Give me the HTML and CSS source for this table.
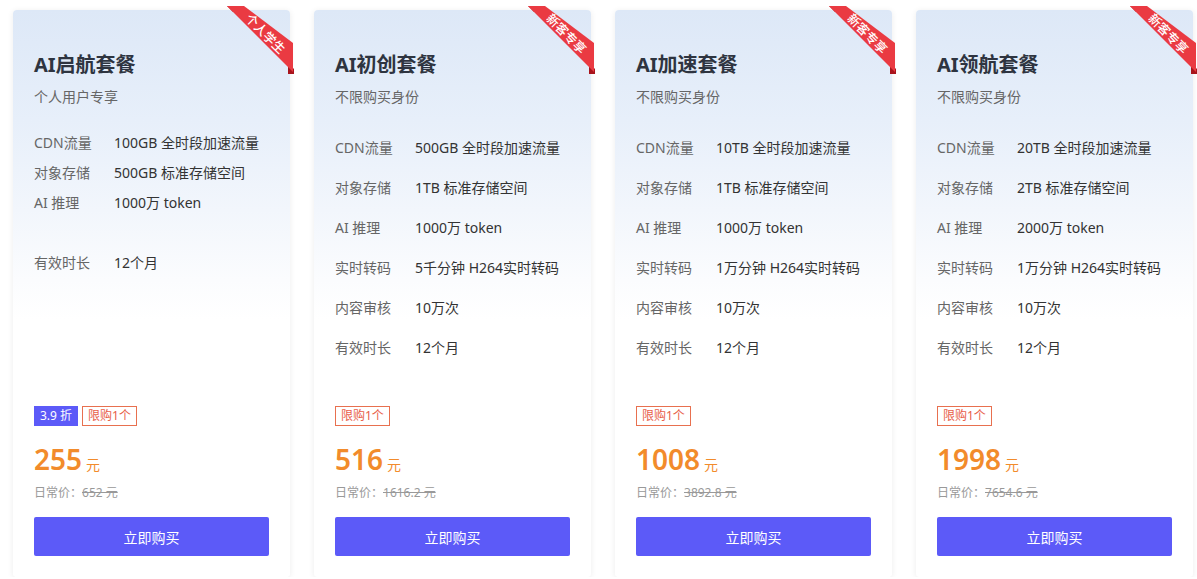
FILE: index.html
```html
<!DOCTYPE html>
<html>
  <head>
    <meta charset="utf-8">
    <title>AI 套餐</title>
    <link rel="stylesheet" href="styles.css">
  </head>
  <body>
    <div class="plans">

      <div class="card">
        <svg class="ribbon" width="70" height="75" viewBox="0 0 70 75">
          <polygon class="fold" points="2,1 8,1 8,7" />
          <polygon class="fold" points="63,58 69,64 69,69 63,69" />
          <polygon class="band" points="2,1 19,1 68,38 68,67" />
          <text x="41" y="28" transform="rotate(45 41 28)">个人学生</text>
        </svg>
        <div class="card-head">
          <h3 class="title">AI启航套餐</h3>
          <p class="sub">个人用户专享</p>
        </div>
        <ul class="specs compact">
          <li><span class="k">CDN流量</span><span class="v">100GB 全时段加速流量</span></li>
          <li><span class="k">对象存储</span><span class="v">500GB 标准存储空间</span></li>
          <li><span class="k">AI 推理</span><span class="v">1000万 token</span></li>
          <li></li>
          <li><span class="k">有效时长</span><span class="v">12个月</span></li>
        </ul>
        <div class="bottom">
          <div class="tags"><span class="tag off">3.9 折</span><span class="tag limit">限购1个</span></div>
          <div class="price">255<small>元</small></div>
          <div class="orig">日常价：<s>652 元</s></div>
          <button class="buy">立即购买</button>
        </div>
      </div>

      <div class="card">
        <svg class="ribbon" width="70" height="75" viewBox="0 0 70 75">
          <polygon class="fold" points="2,1 8,1 8,7" />
          <polygon class="fold" points="63,58 69,64 69,69 63,69" />
          <polygon class="band" points="2,1 19,1 68,38 68,67" />
          <text x="41" y="28" transform="rotate(45 41 28)">新客专享</text>
        </svg>
        <div class="card-head">
          <h3 class="title">AI初创套餐</h3>
          <p class="sub">不限购买身份</p>
        </div>
        <ul class="specs">
          <li><span class="k">CDN流量</span><span class="v">500GB 全时段加速流量</span></li>
          <li><span class="k">对象存储</span><span class="v">1TB 标准存储空间</span></li>
          <li><span class="k">AI 推理</span><span class="v">1000万 token</span></li>
          <li><span class="k">实时转码</span><span class="v">5千分钟 H264实时转码</span></li>
          <li><span class="k">内容审核</span><span class="v">10万次</span></li>
          <li><span class="k">有效时长</span><span class="v">12个月</span></li>
        </ul>
        <div class="bottom">
          <div class="tags"><span class="tag limit">限购1个</span></div>
          <div class="price">516<small>元</small></div>
          <div class="orig">日常价：<s>1616.2 元</s></div>
          <button class="buy">立即购买</button>
        </div>
      </div>

      <div class="card">
        <svg class="ribbon" width="70" height="75" viewBox="0 0 70 75">
          <polygon class="fold" points="2,1 8,1 8,7" />
          <polygon class="fold" points="63,58 69,64 69,69 63,69" />
          <polygon class="band" points="2,1 19,1 68,38 68,67" />
          <text x="41" y="28" transform="rotate(45 41 28)">新客专享</text>
        </svg>
        <div class="card-head">
          <h3 class="title">AI加速套餐</h3>
          <p class="sub">不限购买身份</p>
        </div>
        <ul class="specs">
          <li><span class="k">CDN流量</span><span class="v">10TB 全时段加速流量</span></li>
          <li><span class="k">对象存储</span><span class="v">1TB 标准存储空间</span></li>
          <li><span class="k">AI 推理</span><span class="v">1000万 token</span></li>
          <li><span class="k">实时转码</span><span class="v">1万分钟 H264实时转码</span></li>
          <li><span class="k">内容审核</span><span class="v">10万次</span></li>
          <li><span class="k">有效时长</span><span class="v">12个月</span></li>
        </ul>
        <div class="bottom">
          <div class="tags"><span class="tag limit">限购1个</span></div>
          <div class="price">1008<small>元</small></div>
          <div class="orig">日常价：<s>3892.8 元</s></div>
          <button class="buy">立即购买</button>
        </div>
      </div>

      <div class="card">
        <svg class="ribbon" width="70" height="75" viewBox="0 0 70 75">
          <polygon class="fold" points="2,1 8,1 8,7" />
          <polygon class="fold" points="63,58 69,64 69,69 63,69" />
          <polygon class="band" points="2,1 19,1 68,38 68,67" />
          <text x="41" y="28" transform="rotate(45 41 28)">新客专享</text>
        </svg>
        <div class="card-head">
          <h3 class="title">AI领航套餐</h3>
          <p class="sub">不限购买身份</p>
        </div>
        <ul class="specs">
          <li><span class="k">CDN流量</span><span class="v">20TB 全时段加速流量</span></li>
          <li><span class="k">对象存储</span><span class="v">2TB 标准存储空间</span></li>
          <li><span class="k">AI 推理</span><span class="v">2000万 token</span></li>
          <li><span class="k">实时转码</span><span class="v">1万分钟 H264实时转码</span></li>
          <li><span class="k">内容审核</span><span class="v">10万次</span></li>
          <li><span class="k">有效时长</span><span class="v">12个月</span></li>
        </ul>
        <div class="bottom">
          <div class="tags"><span class="tag limit">限购1个</span></div>
          <div class="price">1998<small>元</small></div>
          <div class="orig">日常价：<s>7654.6 元</s></div>
          <button class="buy">立即购买</button>
        </div>
      </div>

    </div>
  </body>
</html>
```

FILE: styles.css
```css
body { margin: 0; background: #fff; font-family: "Noto Sans", "Noto Sans CJK SC", sans-serif; color: #333; }

.plans { display: grid; grid-template-columns: repeat(4, 277px); gap: 24px; padding: 10px 0 0 13px; }

.card {
  position: relative;
  display: flex;
  flex-direction: column;
  height: 567px;
  box-sizing: border-box;
  padding: 0 21px 21px;
  border-radius: 4px;
  background: linear-gradient(180deg, #dde8f7 0, #e7effa 110px, #f2f6fc 200px, #fbfcfe 270px, #fff 310px);
  box-shadow: 0 1px 6px rgba(0, 0, 0, 0.08);
}

/* corner ribbon */
.ribbon { position: absolute; top: -5px; right: -5px; overflow: visible; }
.ribbon .band { fill: #ea3a42; }
.ribbon .fold { fill: #a8141c; }
.ribbon text { fill: #fff; font-size: 12.5px; font-weight: 500; text-anchor: middle; dominant-baseline: central; font-family: "Noto Sans CJK SC", sans-serif; }

.card-head { padding-top: 44px; }
.title { margin: 0; font-size: 20px; line-height: 22px; font-weight: 700; color: #2e3440; }
.sub { margin: 11px 0 0; font-size: 14px; line-height: 20px; color: #666; }

.specs { list-style: none; margin: 21px 0 0; padding: 0; font-size: 14px; }
.specs li { display: flex; height: 40px; line-height: 40px; }
.specs.compact li { height: 30px; line-height: 30px; }
.specs .k { width: 80px; flex: none; color: #666; }
.specs .v { color: #333; }

.bottom { margin-top: auto; }
.tags { display: flex; gap: 4px; height: 20px; }
.tag { box-sizing: border-box; height: 20px; line-height: 18px; padding: 0 5px; font-size: 12px; border: 1px solid transparent; }
.tag.off { background: #5c5af8; border-color: #5c5af8; color: #fff; }
.tag.limit { border-color: #e8704f; color: #e8604a; }

.price { margin-top: 17px; font-size: 28px; line-height: 32px; font-weight: 600; color: #f28b2b; }
.price small { margin-left: 4px; font-size: 14px; font-weight: 400; }
.orig { margin-top: 4px; font-size: 12px; line-height: 16px; color: #999; }
.orig s { color: #999; }

.buy {
  display: block;
  width: 100%;
  height: 39px;
  margin-top: 16px;
  border: none;
  border-radius: 2px;
  background: #5c5af8;
  color: #fff;
  font-family: inherit;
  font-size: 14px;
}
```
